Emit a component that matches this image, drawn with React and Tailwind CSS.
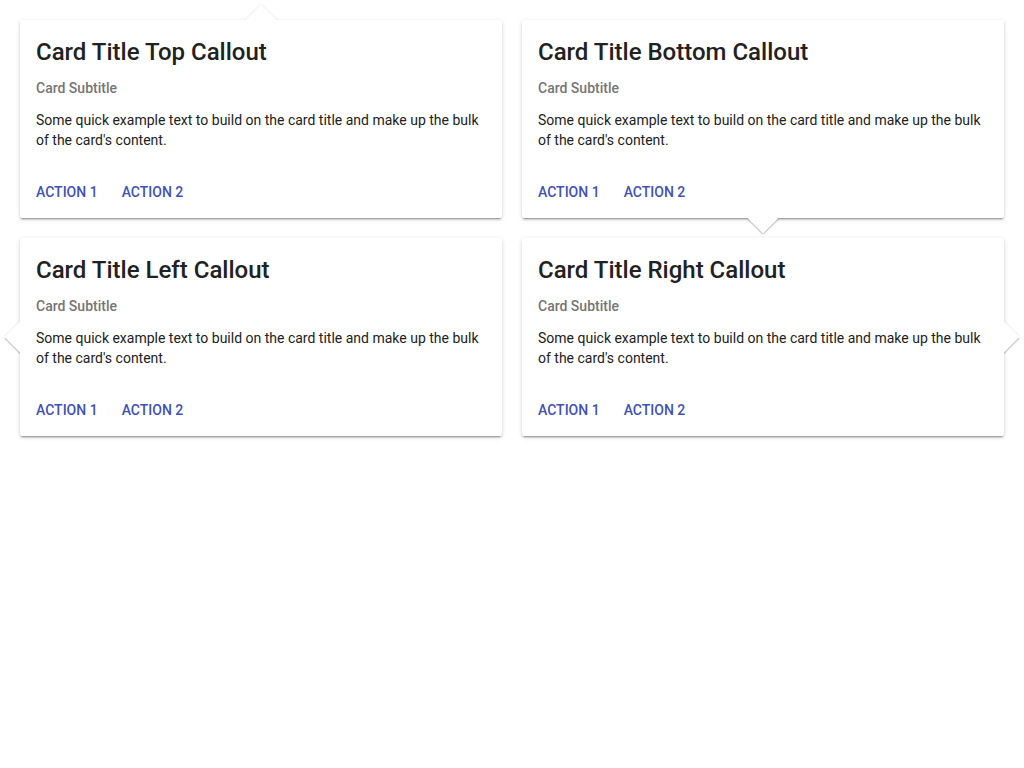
import React from 'react';

const cards = [
  { title: 'Card Title Top Callout', side: 'top' },
  { title: 'Card Title Bottom Callout', side: 'bottom' },
  { title: 'Card Title Left Callout', side: 'left' },
  { title: 'Card Title Right Callout', side: 'right' },
];

// clip box sits outside the card edge, the rotated square is centred on the edge
const clipPos = {
  top: 'left-1/2 -translate-x-1/2 bottom-full w-10 h-4',
  bottom: 'left-1/2 -translate-x-1/2 top-full w-10 h-4',
  left: 'top-1/2 -translate-y-1/2 right-full w-4 h-10',
  right: 'top-1/2 -translate-y-1/2 left-full w-4 h-10',
};

const squarePos = {
  top: 'left-1/2 top-full',
  bottom: 'left-1/2 top-0',
  left: 'left-full top-1/2',
  right: 'left-0 top-1/2',
};

const Callout = ({ side }) => (
  <div className={`absolute overflow-hidden ${clipPos[side]}`}>
    <div
      className={`absolute w-[22px] h-[22px] -translate-x-1/2 -translate-y-1/2 rotate-45 bg-white shadow-[1px_1px_1px_0_rgba(0,0,0,0.2),0_0_3px_0_rgba(0,0,0,0.12)] ${squarePos[side]}`}
    />
  </div>
);

const Card = ({ title, side }) => (
  <div className="relative bg-white rounded-[2px] shadow-[0_3px_1px_-2px_rgba(0,0,0,0.2),0_2px_2px_0_rgba(0,0,0,0.14),0_1px_5px_0_rgba(0,0,0,0.12)]">
    <Callout side={side} />
    <div className="px-4 pt-4">
      <h2 className="text-[24px] leading-8 font-medium text-[#212121]">{title}</h2>
      <div className="mt-[10px] text-[14px] leading-5 font-medium text-[#757575]">Card Subtitle</div>
      <p className="mt-3 text-[14px] leading-5 text-[#212121]">
        Some quick example text to build on the card title and make up the bulk of the card's content.
      </p>
    </div>
    <div className="flex gap-2 px-2 pt-6 pb-2">
      <button className="h-9 px-2 text-[14px] font-medium uppercase text-[#3f51b5]">Action 1</button>
      <button className="h-9 px-2 text-[14px] font-medium uppercase text-[#3f51b5]">Action 2</button>
    </div>
  </div>
);

export default function App() {
  return (
    <div className="min-h-screen bg-white p-5 font-['Roboto',sans-serif]">
      <div className="grid grid-cols-2 gap-5">
        {cards.map(c => (
          <Card key={c.title} title={c.title} side={c.side} />
        ))}
      </div>
    </div>
  );
}
